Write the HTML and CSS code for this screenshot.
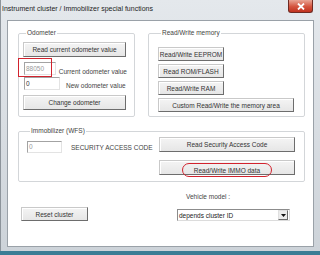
FILE: index.html
```html
<!DOCTYPE html>
<html>
<head>
<meta charset="utf-8">
<link rel="stylesheet" href="styles.css">
</head>
<body>
<div class="window">
  <div class="titlebar">
    <span class="title">Instrument cluster / Immobilizer special functions</span>
    <span class="close"><svg width="10" height="7" viewBox="0 0 10 7"><path d="M2 0.5 L8 6.5 M8 0.5 L2 6.5" stroke="#fff" stroke-width="1.8" fill="none"/></svg></span>
  </div>
  <div class="client">
    <div class="top-row">
      <fieldset class="group odo">
        <legend>Odometer</legend>
        <div class="btn btn-odo">Read current odometer value</div>
        <div class="field-row row-cur">
          <span class="edit gray">88050<span class="mark-rect"></span></span>
          <span class="lbl">Current odometer value</span>
        </div>
        <div class="field-row row-new">
          <span class="edit">0</span>
          <span class="lbl">New odometer value</span>
        </div>
        <div class="btn btn-odo btn-change">Change odometer</div>
      </fieldset>
      <fieldset class="group mem">
        <legend>Read/Write memory</legend>
        <div class="btn btn-mem">Read/Write EEPROM</div>
        <div class="btn btn-mem">Read ROM/FLASH</div>
        <div class="btn btn-mem">Read/Write RAM</div>
        <div class="btn btn-wide">Custom Read/Write the memory area</div>
      </fieldset>
    </div>
    <fieldset class="group immo">
      <legend>Immobilizer (WFS)</legend>
      <div class="immo-left">
        <span class="edit gray edit-immo">0</span>
        <span class="lbl lbl-sac">SECURITY ACCESS CODE</span>
      </div>
      <div class="immo-right">
        <div class="btn btn-wide">Read Security Access Code</div>
        <div class="btn btn-wide btn-immo"><span class="pill">Read/Write IMMO data</span></div>
      </div>
    </fieldset>
    <div class="bottom-row">
      <div class="btn btn-reset">Reset cluster</div>
      <div class="vehicle">
        <span class="lbl lbl-vm">Vehicle model :</span>
        <div class="combo">
          <span class="combo-text">depends cluster ID</span>
          <span class="combo-btn"><svg width="5" height="3" viewBox="0 0 5 3"><path d="M0 0 H5 L2.5 3 Z" fill="#111"/></svg></span>
        </div>
      </div>
    </div>
  </div>
  <div class="bottom-frame"></div>
</div>
</body>
</html>
```
FILE: styles.css
```css
* { box-sizing: border-box; }
html, body { margin: 0; padding: 0; }
body {
  width: 320px;
  height: 255px;
  background: #3b7d95;
  font-family: "Liberation Sans", Arial, sans-serif;
  font-size: 6.5px;
  color: #333;
  overflow: hidden;
}
.window {
  width: 320px;
  height: 251px;
  background: linear-gradient(to bottom, #e4e8ec, #cdd3d9);
  padding: 0 6px 0 6px;
  display: flex;
  flex-direction: column;
  border-left: 1px solid #8d949b;
}
.titlebar {
  height: 20px;
  display: flex;
  align-items: flex-start;
  position: relative;
  margin-left: -4px;
}
.title {
  margin-top: 5px;
  margin-left: -1px;
  color: #1e1e1e;
  font-size: 7px;
  line-height: 8px;
}
.close {
  position: absolute;
  left: 285px;
  top: 0;
  width: 25px;
  height: 13px;
  border: 1px solid #6e2a22;
  border-top: none;
  border-radius: 0 0 3px 3px;
  background: linear-gradient(to bottom, #e9a595, #d4543e 55%, #c0321f);
  display: flex;
  align-items: center;
  justify-content: center;
}
.client {
  height: 227px;
  background: #fff;
  border: 1px solid #9aa1a8;
  padding: 8px 0 0 10px;
}
.top-row {
  display: flex;
  gap: 13px;
}
.group {
  margin: 0;
  border: 1px solid #d3d6d9;
  border-radius: 2px;
  min-width: 0;
}
.group legend {
  padding: 0 1px;
  margin-left: 3px;
  line-height: 8px;
  color: #444;
}
.odo {
  width: 117px;
  padding: 5px 7px 6px 4px;
}
.mem {
  width: 157px;
  padding: 10px 9px 4px 9px;
}
.btn {
  height: 15px;
  border: 1px solid;
  border-color: #c9c9c9 #6d6d6d #6d6d6d #c9c9c9;
  background: linear-gradient(to bottom, #f4f4f4, #e6e6e6);
  box-shadow: inset 1px 1px 0 #fff;
  display: flex;
  align-items: center;
  justify-content: center;
  color: #333;
  white-space: nowrap;
}
.btn-odo { width: 103px; }
.btn-change { margin-top: 5px; }
.field-row {
  display: flex;
  align-items: center;
  height: 13px;
}
.row-cur { margin-top: 5px; }
.row-new { margin-top: 2px; }
.edit {
  position: relative;
  width: 36px;
  height: 13px;
  margin-left: 1px;
  border: 1px solid;
  border-color: #a3a3a3 #e3e3e3 #e3e3e3 #a3a3a3;
  background: #fff;
  padding-left: 1px;
  line-height: 11px;
  color: #333;
}
.edit.gray { color: #9a9a9a; }
.mark-rect {
  position: absolute;
  left: -7px;
  top: -5px;
  width: 34px;
  height: 19px;
  border: 1.5px solid #d2232e;
}
.lbl { color: #444; white-space: nowrap; }
.row-cur .lbl { margin-left: 3px; margin-top: 6px; }
.row-new .lbl { margin-left: 6px; margin-top: 3px; }
.btn-mem { width: 66px; height: 14px; margin-bottom: 3px; }
.mem .btn-wide { height: 14px; }
.btn-wide { width: 136px; }
.immo {
  width: 287px;
  margin-top: 10px;
  padding: 2px 9px 6px 8px;
  display: flex;
  justify-content: space-between;
  align-items: flex-start;
}
.immo-left {
  display: flex;
  align-items: center;
  margin-top: 4px;
}
.edit-immo { width: 35px; height: 12px; margin-left: 0; line-height: 10px; }
.lbl-sac { margin-left: 9px; margin-top: 1px; }
.immo-right {
  display: flex;
  flex-direction: column;
  gap: 8px;
}
.pill {
  border: 1.5px solid #d2232e;
  border-radius: 7px;
  width: 90px;
  height: 14px;
  margin-top: 2px;
  display: flex;
  align-items: center;
  justify-content: center;
}
.btn-immo { align-items: flex-start; }
.bottom-row {
  display: flex;
  align-items: flex-end;
  height: 39px;
}
.btn-reset {
  width: 67px;
  height: 14px;
  margin-left: 3px;
}
.vehicle {
  display: flex;
  flex-direction: column;
  margin-left: 89px;
}
.lbl-vm { margin-left: 9px; line-height: 8px; }
.combo {
  margin-top: 8px;
  width: 113px;
  height: 12px;
  border: 1px solid;
  border-color: #8c8c8c #dcdcdc #dcdcdc #8c8c8c;
  background: #fff;
  display: flex;
  align-items: center;
  justify-content: space-between;
  padding: 0 1px 0 1px;
}
.combo-text { color: #222; }
.combo-btn {
  width: 10px;
  height: 10px;
  border: 1px solid;
  border-color: #e0e0e0 #6d6d6d #6d6d6d #e0e0e0;
  background: #ececec;
  display: flex;
  align-items: center;
  justify-content: center;
}
.bottom-frame { flex: 1; }
```
